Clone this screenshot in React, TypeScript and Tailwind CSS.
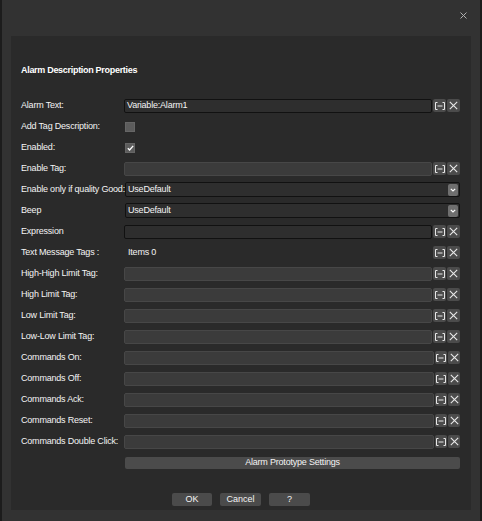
import React from 'react'

const font = { fontFamily: '"Liberation Sans", Arial, sans-serif' }

function DotsButton({ w = 'w-[13px]' }: { w?: string }) {
  return (
    <div className={`${w} h-[13px] bg-[#4b4b4b] rounded-[2px] flex items-center justify-center shrink-0`}>
      <svg width="10" height="8" viewBox="0 0 10 8" fill="none" stroke="#e8e8e8" strokeWidth="1">
        <path d="M2.5 0.5H0.5V7.5H2.5" />
        <path d="M7.5 0.5H9.5V7.5H7.5" />
        <path d="M2.5 4H7.5" />
      </svg>
    </div>
  )
}

function ClearButton({ w = 'w-[13px]' }: { w?: string }) {
  return (
    <div className={`${w} h-[13px] bg-[#4b4b4b] rounded-[2px] flex items-center justify-center shrink-0`}>
      <svg width="9" height="9" viewBox="0 0 9 9" fill="none" stroke="#e8e8e8" strokeWidth="1.1">
        <path d="M0.8 0.8L8.2 8.2M8.2 0.8L0.8 8.2" />
      </svg>
    </div>
  )
}

function TagField({ dark, wide }: { dark?: boolean; wide?: boolean }) {
  const input = dark
    ? 'bg-[#2e2e2e] border-[#111111]'
    : 'bg-[#3b3b3b] border-[#474747]'
  return (
    <div className="flex items-center gap-[1px]">
      <div className={`${wide ? 'w-[310px]' : 'w-[308px]'} h-[14px] border ${input} rounded-[2px] shrink-0`} />
      <DotsButton w={wide ? 'w-[12px]' : 'w-[13px]'} />
      <ClearButton w={wide ? 'w-[12px]' : 'w-[13px]'} />
    </div>
  )
}

function Dropdown({ value }: { value: string }) {
  return (
    <div className="w-[335px] h-[15px] bg-[#2e2e2e] border border-[#111111] rounded-[2px] flex items-center pl-[2px] pr-[1px]">
      <span className="flex-1 text-[9px] text-[#f4f4f4] tracking-[-0.2px]">{value}</span>
      <div className="w-[10px] h-[12px] bg-[#6f6f6f] rounded-[2px] flex items-center justify-center">
        <svg width="6" height="4" viewBox="0 0 6 4" fill="none" stroke="#ffffff" strokeWidth="1.2">
          <path d="M0.8 0.8L3 3L5.2 0.8" />
        </svg>
      </div>
    </div>
  )
}

function Row({ label, children }: { label: string; children?: React.ReactNode }) {
  return (
    <div className="h-[21px] flex items-center">
      <div className="w-[104px] text-[9px] text-[#f4f4f4] tracking-[-0.2px] whitespace-nowrap">{label}</div>
      {children}
    </div>
  )
}

export default function App() {
  return (
    <div style={font} className="w-[482px] h-[521px] bg-[#323232] border-x-2 border-[#1c1c1c] flex flex-col">
      <div className="h-[36px] flex justify-end items-start pt-[12px] pr-[13px]">
        <svg width="7" height="7" viewBox="0 0 7 7" fill="none" stroke="#b0b0b0" strokeWidth="1">
          <path d="M0.5 0.5L6.5 6.5M6.5 0.5L0.5 6.5" />
        </svg>
      </div>
      <div className="ml-[9px] w-[460px] h-[474px] bg-[#2a2a2a] pl-[10px] pr-[11px] pt-[28px] flex flex-col">
        <div className="h-[14px] flex items-center text-[9px] font-bold text-white tracking-[-0.3px]">
          Alarm Description Properties
        </div>
        <div className="mt-[17px] flex flex-col">
          <Row label="Alarm Text:">
            <div className="flex items-center gap-[1px]">
              <div className="w-[308px] h-[14px] bg-[#2e2e2e] border border-[#111111] rounded-[2px] flex items-center pl-[2px] text-[9px] text-[#f4f4f4] tracking-[-0.2px]">
                Variable:Alarm1
              </div>
              <DotsButton />
              <ClearButton />
            </div>
          </Row>
          <Row label="Add Tag Description:">
            <div className="w-[10px] h-[10px] bg-[#5c5c5c] border border-[#666666]" />
          </Row>
          <Row label="Enabled:">
            <div className="w-[10px] h-[10px] bg-[#5c5c5c] border border-[#666666] flex items-center justify-center">
              <svg width="7" height="6" viewBox="0 0 7 6" fill="none" stroke="#ffffff" strokeWidth="1.3">
                <path d="M0.8 3.2L2.6 5L6.2 0.8" />
              </svg>
            </div>
          </Row>
          <Row label="Enable Tag:">
            <TagField />
          </Row>
          <Row label="Enable only if quality Good:">
            <Dropdown value="UseDefault" />
          </Row>
          <Row label="Beep">
            <Dropdown value="UseDefault" />
          </Row>
          <Row label="Expression">
            <TagField dark />
          </Row>
          <Row label="Text Message Tags :">
            <div className="w-[335px] flex items-center">
              <span className="flex-1 pl-[3px] text-[9px] text-[#f4f4f4] tracking-[-0.2px]">Items 0</span>
              <div className="flex items-center gap-[1px]">
                <DotsButton />
                <ClearButton />
              </div>
            </div>
          </Row>
          <Row label="High-High Limit Tag:">
            <TagField />
          </Row>
          <Row label="High Limit Tag:">
            <TagField />
          </Row>
          <Row label="Low Limit Tag:">
            <TagField />
          </Row>
          <Row label="Low-Low Limit Tag:">
            <TagField />
          </Row>
          <Row label="Commands On:">
            <TagField wide />
          </Row>
          <Row label="Commands Off:">
            <TagField wide />
          </Row>
          <Row label="Commands Ack:">
            <TagField wide />
          </Row>
          <Row label="Commands Reset:">
            <TagField wide />
          </Row>
          <Row label="Commands Double Click:">
            <TagField wide />
          </Row>
          <Row label="">
            <div className="w-[335px] h-[12px] bg-[#4b4b4b] rounded-[2px] flex items-center justify-center text-[9px] text-[#f4f4f4] tracking-[-0.2px]">
              Alarm Prototype Settings
            </div>
          </Row>
        </div>
        <div className="mt-[20px] flex justify-center gap-[8px] pl-[1px]">
          <div className="w-[40px] h-[13px] bg-[#4b4b4b] rounded-[2px] flex items-center justify-center text-[9px] text-[#f4f4f4]">OK</div>
          <div className="w-[41px] h-[13px] bg-[#4b4b4b] rounded-[2px] flex items-center justify-center text-[9px] text-[#f4f4f4]">Cancel</div>
          <div className="w-[41px] h-[13px] bg-[#4b4b4b] rounded-[2px] flex items-center justify-center text-[9px] text-[#f4f4f4]">?</div>
        </div>
      </div>
    </div>
  )
}
